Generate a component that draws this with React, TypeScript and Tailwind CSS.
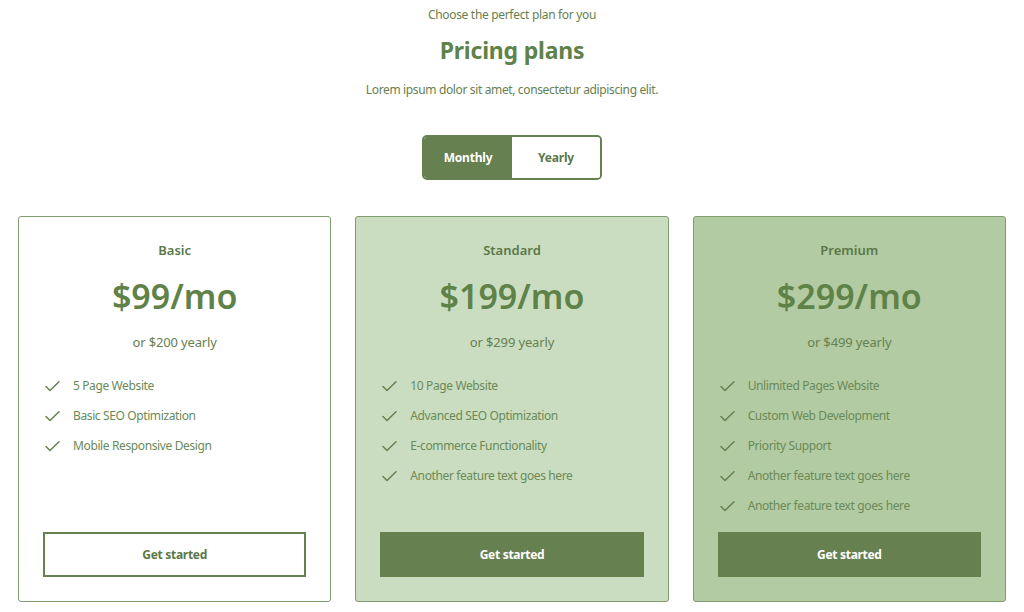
import React, { useState } from "react";

interface Plan {
  name: string;
  price: string;
  yearly: string;
  features: string[];
  card: string;
  button: string;
}

const plans: Plan[] = [
  {
    name: "Basic",
    price: "$99/mo",
    yearly: "or $200 yearly",
    features: ["5 Page Website", "Basic SEO Optimization", "Mobile Responsive Design"],
    card: "bg-white",
    button: "border-2 border-[#668050] bg-white text-[#5a7848]",
  },
  {
    name: "Standard",
    price: "$199/mo",
    yearly: "or $299 yearly",
    features: [
      "10 Page Website",
      "Advanced SEO Optimization",
      "E-commerce Functionality",
      "Another feature text goes here",
    ],
    card: "bg-[#cbddc0]",
    button: "bg-[#668050] text-white",
  },
  {
    name: "Premium",
    price: "$299/mo",
    yearly: "or $499 yearly",
    features: [
      "Unlimited Pages Website",
      "Custom Web Development",
      "Priority Support",
      "Another feature text goes here",
      "Another feature text goes here",
    ],
    card: "bg-[#b3cba2]",
    button: "bg-[#668050] text-white",
  },
];

function CheckIcon() {
  return (
    <svg width="15" height="11" viewBox="0 0 15 11" fill="none" className="shrink-0">
      <path d="M1 5.5 5 9.5 14 0.8" stroke="#668050" strokeWidth="1.5" strokeLinecap="round" strokeLinejoin="round" />
    </svg>
  );
}

export default function App() {
  const [period, setPeriod] = useState<"monthly" | "yearly">("monthly");

  return (
    <div className="min-h-[612px] bg-white px-[18px] pt-[6px] pb-[10px] text-[#5f7f4c]" style={{ fontFamily: '"Noto Sans", "Open Sans", sans-serif' }}>
      {/* Header */}
      <div className="flex flex-col items-center text-center">
        <p className="text-[12px] leading-[18px] tracking-[-0.32px] text-[#668050]">Choose the perfect plan for you</p>
        <h2 className="mt-[10px] text-[23px] font-bold leading-[32px] tracking-[-0.2px] text-[#5f8249]">Pricing plans</h2>
        <p className="mt-[15px] text-[12px] leading-[18px] tracking-[-0.36px] text-[#668050]">
          Lorem ipsum dolor sit amet, consectetur adipiscing elit.
        </p>

        {/* Toggle */}
        <div className="mt-[36px] flex h-[45px] w-[180px] overflow-hidden rounded-[5px] border-2 border-[#668050]">
          <button
            onClick={() => setPeriod("monthly")}
            className={`flex-1 text-[12px] font-bold tracking-[-0.2px] ${period === "monthly" ? "bg-[#668050] text-white" : "bg-white text-[#5a7848]"}`}
          >
            Monthly
          </button>
          <button
            onClick={() => setPeriod("yearly")}
            className={`flex-1 text-[12px] font-bold tracking-[-0.2px] ${period === "yearly" ? "bg-[#668050] text-white" : "bg-white text-[#5a7848]"}`}
          >
            Yearly
          </button>
        </div>
      </div>

      {/* Plans */}
      <div className="mt-[36px] grid grid-cols-3 gap-6">
        {plans.map((plan) => (
          <div
            key={plan.name}
            className={`flex h-[386px] flex-col rounded-[3px] border border-[#7f9d6d] px-6 pt-[23px] pb-6 ${plan.card}`}
          >
            <h3 className="text-center text-[13px] font-semibold leading-[20px] text-[#5a7848]">{plan.name}</h3>
            <p className="mt-[16px] text-center text-[34px] font-semibold leading-[40px] text-[#5f8249]">{plan.price}</p>
            <p className="mt-[16px] text-center text-[13px] leading-[20px] tracking-[-0.15px] text-[#668050]">{plan.yearly}</p>
            <ul className="mt-[24px] flex flex-col gap-[10px] pl-[2px]">
              {plan.features.map((f, i) => (
                <li key={i} className="flex h-[20px] items-center gap-[13px] text-[12px] tracking-[-0.38px] text-[#6a8a58]">
                  <CheckIcon />
                  <span>{f}</span>
                </li>
              ))}
            </ul>
            <button className={`mt-auto h-[45px] w-full text-[12px] font-bold tracking-[-0.3px] ${plan.button}`}>Get started</button>
          </div>
        ))}
      </div>
    </div>
  );
}
